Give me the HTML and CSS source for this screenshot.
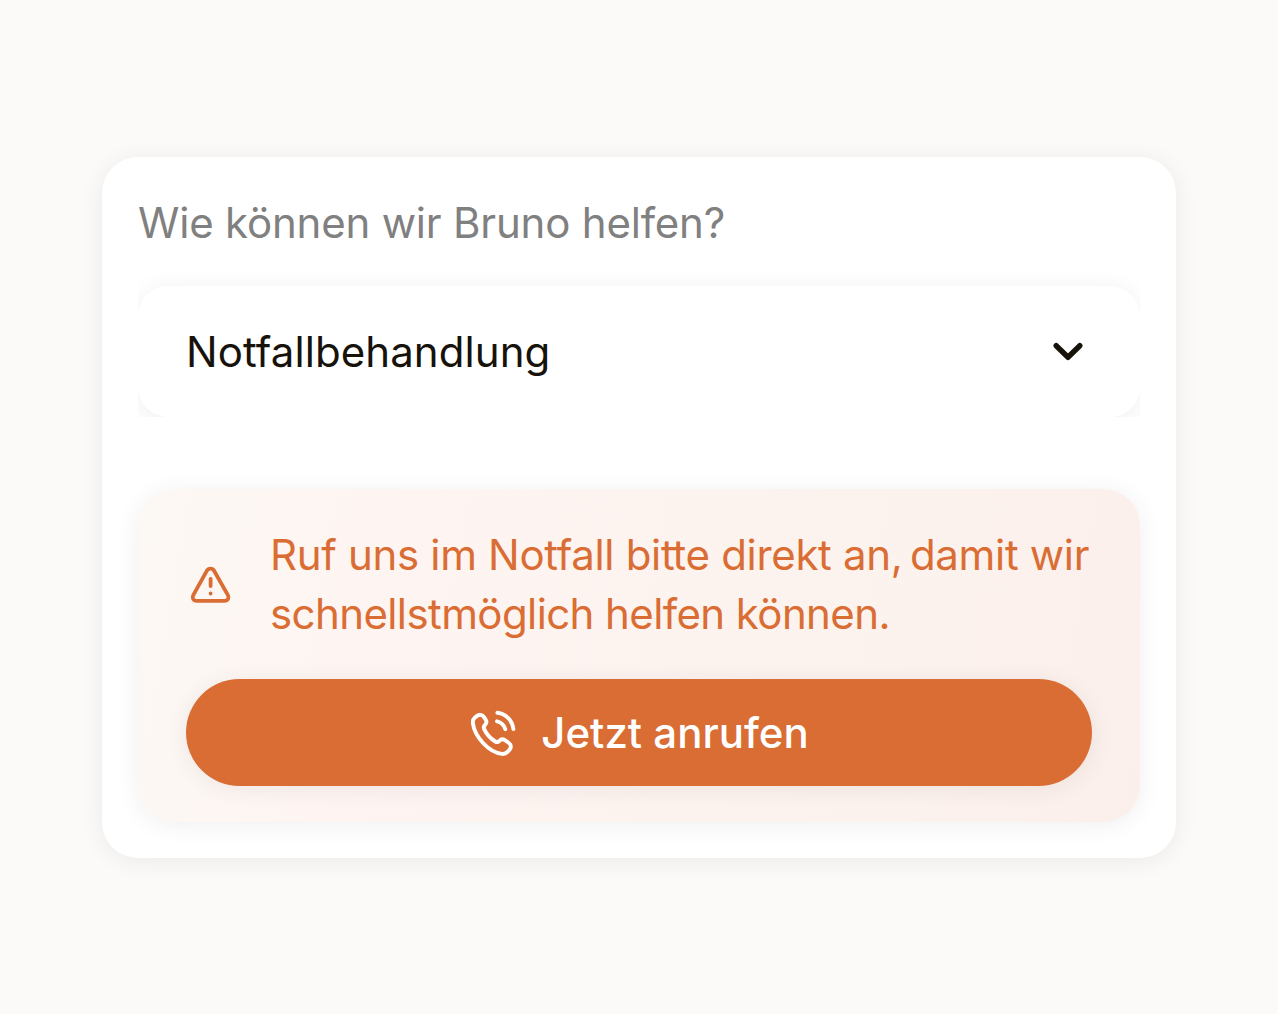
FILE: index.html
```html
<!DOCTYPE html>
<html lang="de">

<head>
    <meta charset="UTF-8">
    <meta name="viewport" content="width=device-width, initial-scale=1.0">
    <title>Notfallbehandlung</title>
    <link rel="stylesheet" href="styles.css">
</head>

<body>
    <main class="card">
        <h1 class="title">Wie können wir Bruno helfen?</h1>

        <div class="select-wrap">
            <button class="select" type="button">
                <span class="select-text">Notfallbehandlung</span>
                <svg class="chevron" viewBox="0 0 48 48">
                    <path d="M12.2 17.7 24 29.3l11.8-11.6" />
                </svg>
            </button>
        </div>

        <section class="alert">
            <div class="alert-row">
                <svg class="warning" viewBox="0 0 48 48">
                    <path d="M21.2 10.2 7.3 35.2c-1.5 2.8.1 5.6 3 5.6h28.6c2.9 0 4.5-2.8 3-5.6L27.8 10.2c-1.6-2.2-5-2.2-6.6 0z" />
                    <path d="M24.6 18.8v7.3M24.6 33.5v.1" />
                </svg>
                <p class="alert-text">
                    <span class="line line-first">Ruf uns im Notfall bi<span class="joined">t</span>te direkt an<span class="comma">, </span>damit wir</span>
                    <span class="line line-second">schnellstmöglich helfen können.</span>
                </p>
            </div>

            <button class="call" type="button">
                <svg class="phone" viewBox="0 0 48 48">
                    <path d="M6.7 9.8 9 7.9c2.2-1.7 5-1.4 6.6.8l2 2.8c1.2 1.8 1 3.8-.5 5.3-1.5 1.4-1.8 2.5-.9 4.3 2.4 5.2 6.3 9.4 11.1 12.4 1.6 1 2.8.7 4.1-.7 1.5-1.6 3.6-1.9 5.5-.6l4 2.8c2.3 1.6 2.5 4.4.8 6.6l-2.2 2.3c-1.5 1.6-3.2 2.2-5.4 2C20.4 44.3 6.7 28.6 4.9 15.2c-.3-2.2.3-4.1 1.8-5.4z" />
                    <path d="M29.4 4.8c8.7 1.1 15.1 7.6 16 16.2M29 13.3c4.2.9 7.1 3.7 8.3 7.9" />
                </svg>
                <span class="call-text">Jetzt anrufen</span>
            </button>
        </section>
    </main>
</body>

</html>
```
FILE: styles.css
```css
* {
    margin: 0;
    padding: 0;
    box-sizing: border-box;
}

body {
    display: flex;
    justify-content: center;
    align-items: flex-start;
    height: 100vh;
    padding-top: 157px;
    font-family: Inter, "Liberation Sans", sans-serif;
    background-color: #fbfaf8;
}

button {
    border: none;
    font-family: inherit;
    cursor: pointer;
}

svg {
    flex: none;
    width: 48px;
    height: 48px;
    fill: none;
    stroke: currentColor;
    stroke-linecap: round;
    stroke-linejoin: round;
}

.card {
    width: 1074px;
    height: 701px;
    padding: 36px;
    border-radius: 36px;
    background-color: #fff;
    box-shadow: 0 3px 24px rgba(0, 0, 0, 0.065);
}

.title {
    height: 60px;
    line-height: 60px;
    font-size: 42px;
    font-weight: 400;
    letter-spacing: -0.2px;
    color: #808080;
    white-space: nowrap;
}

/* the wrapper cuts the shadow off at the sides and the bottom */
.select-wrap {
    padding-top: 33px;
    overflow: hidden;
}

.select {
    display: flex;
    justify-content: space-between;
    align-items: center;
    width: 100%;
    height: 131px;
    padding: 0 48px;
    border-radius: 30px;
    font-size: 42px;
    letter-spacing: 0.08px;
    color: #17130b;
    background-color: #fff;
    box-shadow: 0 3px 24px rgba(0, 0, 0, 0.065);
}

.chevron {
    stroke-width: 5.4;
}

.alert {
    display: flex;
    flex-direction: column;
    gap: 36px;
    height: 333px;
    margin-top: 72px;
    padding: 36px 48px;
    border-radius: 36px;
    color: #da6d34;
    background: linear-gradient(100deg, #fcf8f4 0%, #fef5f2 22%, #fcf3ef 65%, #fbefeb 100%);
    box-shadow: 0 3px 24px rgba(0, 0, 0, 0.065);
}

.alert-row {
    display: flex;
    align-items: center;
    gap: 36px;
    height: 118px;
}

.warning {
    stroke-width: 3.8;
}

.alert-text {
    font-size: 42px;
    line-height: 59px;
    white-space: nowrap;
}

.line {
    display: block;
}

.line-first {
    letter-spacing: -0.32px;
}

.line-second {
    letter-spacing: -0.6px;
}

.joined {
    letter-spacing: -2.2px;
}

.comma {
    letter-spacing: -2.4px;
}

.call {
    display: flex;
    justify-content: center;
    align-items: center;
    gap: 24px;
    height: 107px;
    border-radius: 54px;
    font-size: 42px;
    font-weight: 500;
    color: #fff;
    background-color: #da6d34;
    box-shadow: 0 3px 24px rgba(0, 0, 0, 0.065);
}

.phone {
    margin: -1px 1px 0 -1px;
    stroke-width: 3.9;
}
```
